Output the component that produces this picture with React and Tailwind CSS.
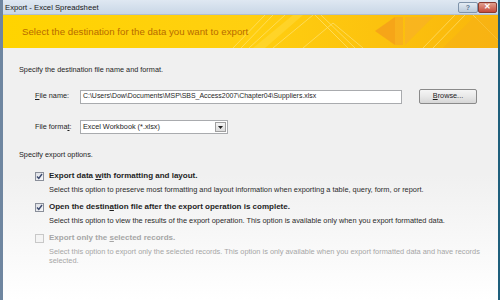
import React from "react";

function Check() {
  return (
    <svg width="7" height="7" viewBox="0 0 7 7">
      <path d="M1 3.5 L2.8 5.5 L6 1" fill="none" stroke="#3c4a6e" strokeWidth="1.4" />
    </svg>
  );
}

function Banner() {
  return (
    <div className="relative h-[33px] overflow-hidden bg-gradient-to-r from-[#ffd400] via-[#ffcf10] to-[#f9b60c] flex items-center pl-[19px]">
      <svg className="absolute inset-0" width="495" height="33" viewBox="0 0 495 33">
        <g stroke="#ffe680" strokeWidth="0.8" fill="none" opacity="0.8">
          <line x1="230" y1="33" x2="262" y2="0" />
          <line x1="238" y1="33" x2="270" y2="0" />
          <line x1="246" y1="33" x2="282" y2="0" />
          <line x1="270" y1="33" x2="310" y2="0" />
          <line x1="312" y1="0" x2="345" y2="33" />
          <line x1="318" y1="0" x2="352" y2="33" />
          <line x1="300" y1="33" x2="330" y2="8" />
          <line x1="330" y1="8" x2="360" y2="33" />
          <line x1="420" y1="33" x2="452" y2="0" />
          <line x1="430" y1="33" x2="462" y2="0" />
          <line x1="470" y1="0" x2="495" y2="25" />
        </g>
        <polygon points="372,16 392,2 392,30" fill="#f5a21a" opacity="0.9" />
        <polygon points="392,2 400,2 400,30 392,30" fill="#f7ac20" opacity="0.8" />
        <polygon points="402,2 430,2 402,30" fill="#f8b026" opacity="0.7" />
        <polygon points="440,33 470,3 495,3 495,33" fill="#f6b018" opacity="0.6" />
        <polygon points="250,33 290,0 300,0 262,33" fill="#ffdc40" opacity="0.5" />
      </svg>
      <span className="relative text-[9.7px] text-[#b76b00] leading-none">
        Select the destination for the data you want to export
      </span>
    </div>
  );
}

function OptionRow({ checked, disabled, label, desc }) {
  return (
    <div className="flex items-start">
      <div
        className={
          "w-[9px] h-[9px] border flex items-center justify-center mt-[1px] " +
          (disabled
            ? "border-[#c8c8c8] bg-[#f4f4f4]"
            : "border-[#8a8f9a] bg-gradient-to-br from-[#dcdfe5] to-[#f8f8fa]")
        }
      >
        {checked && <Check />}
      </div>
      <div className="ml-[5px] flex flex-col">
        <div
          className={
            "text-[8px] font-bold leading-[10px] " +
            (disabled ? "text-[#a6a6a6]" : "text-[#1e1e1e]")
          }
        >
          {label}
        </div>
        <div
          className={
            "text-[7.4px] leading-[9px] mt-[4px] w-[438px] " +
            (disabled ? "text-[#a6a6a6]" : "text-[#2a2a2a]")
          }
        >
          {desc}
        </div>
      </div>
    </div>
  );
}

export default function App() {
  return (
    <div
      className="w-[500px] h-[300px] overflow-hidden flex flex-col border-l-[3px] border-l-[#6f86a0] border-r-[2px] border-r-[#1f5f7c]"
      style={{ fontFamily: "'Liberation Sans', Arial, sans-serif" }}
    >
      {/* title bar */}
      <div className="h-[15px] bg-gradient-to-b from-[#dfe8f2] to-[#c9d7e6] flex items-center pl-[2px] pr-[1px] border-b border-b-[#b0bfd0]">
        <span className="text-[7.7px] text-[#1a1a1a] leading-none mt-[2px]">Export - Excel Spreadsheet</span>
        <div className="ml-auto flex items-center">
          <div className="w-[20px] h-[11px] border border-[#7f93aa] rounded-[2px] bg-gradient-to-b from-[#e4ecf4] to-[#b9c9da] flex items-center justify-center text-[7px] text-white font-bold leading-none">
            <span className="text-[#5e7894]">?</span>
          </div>
          <div className="w-[19px] h-[11px] border border-[#8a3a30] rounded-[2px] bg-gradient-to-b from-[#e0a090] to-[#c5473a] flex items-center justify-center text-[8px] text-white font-bold leading-none">
            ✕
          </div>
        </div>
      </div>

      <Banner />

      {/* body */}
      <div className="flex-1 bg-gradient-to-b from-[#f0f0f0] via-[#f0f0f0] to-[#ffffff] flex flex-col pl-[16px] pt-[17px]">
        <div className="text-[7.3px] leading-[9px] text-[#1e1e1e]">
          Specify the destination file name and format.
        </div>

        <div className="flex items-center mt-[15px] pl-[16px]">
          <div className="w-[45px] text-[7.3px] text-[#1e1e1e]">
            <span className="underline">F</span>ile name:
          </div>
          <div className="w-[322px] h-[14px] bg-white border border-[#a9abae] flex items-center pl-[2px] text-[6.95px] text-[#1e1e1e]">
            C:\Users\Dow\Documents\MSP\SBS_Access2007\Chapter04\Suppliers.xlsx
          </div>
          <div className="ml-[17px] w-[58px] h-[15px] border border-[#8a8a8a] rounded-[2px] bg-gradient-to-b from-[#f5f5f5] via-[#e8e8e8] to-[#d6d6d6] flex items-center justify-center text-[7.3px] text-[#1e1e1e]">
            <span className="underline">B</span>rowse...
          </div>
        </div>

        <div className="flex items-center mt-[16px] pl-[16px]">
          <div className="w-[45px] text-[7.3px] text-[#1e1e1e]">
            File forma<span className="underline">t</span>:
          </div>
          <div className="w-[148px] h-[14px] bg-white border border-[#a9abae] flex items-center pl-[2px] pr-[1px] text-[7.3px] text-[#1e1e1e]">
            <span>Excel Workbook (*.xlsx)</span>
            <div className="ml-auto w-[11px] h-[10px] border border-[#a0a0a0] bg-gradient-to-b from-[#f4f4f4] to-[#dcdcdc] flex items-center justify-center">
              <svg width="5" height="3" viewBox="0 0 5 3">
                <path d="M0 0 L5 0 L2.5 3 Z" fill="#222" />
              </svg>
            </div>
          </div>
        </div>

        <div className="text-[7.3px] leading-[9px] text-[#1e1e1e] mt-[16px]">
          Specify export options.
        </div>

        <div className="flex flex-col pl-[16px] mt-[12px] gap-[8px]">
          <OptionRow
            checked
            label={<>Export data <span className="underline">w</span>ith formatting and layout.</>}
            desc="Select this option to preserve most formatting and layout information when exporting a table, query, form, or report."
          />
          <OptionRow
            checked
            label={<>Open the destin<span className="underline">a</span>tion file after the export operation is complete.</>}
            desc="Select this option to view the results of the export operation. This option is available only when you export formatted data."
          />
          <OptionRow
            disabled
            label={<>Export only the <span className="underline">s</span>elected records.</>}
            desc="Select this option to export only the selected records. This option is only available when you export formatted data and have records selected."
          />
        </div>
      </div>
    </div>
  );
}
